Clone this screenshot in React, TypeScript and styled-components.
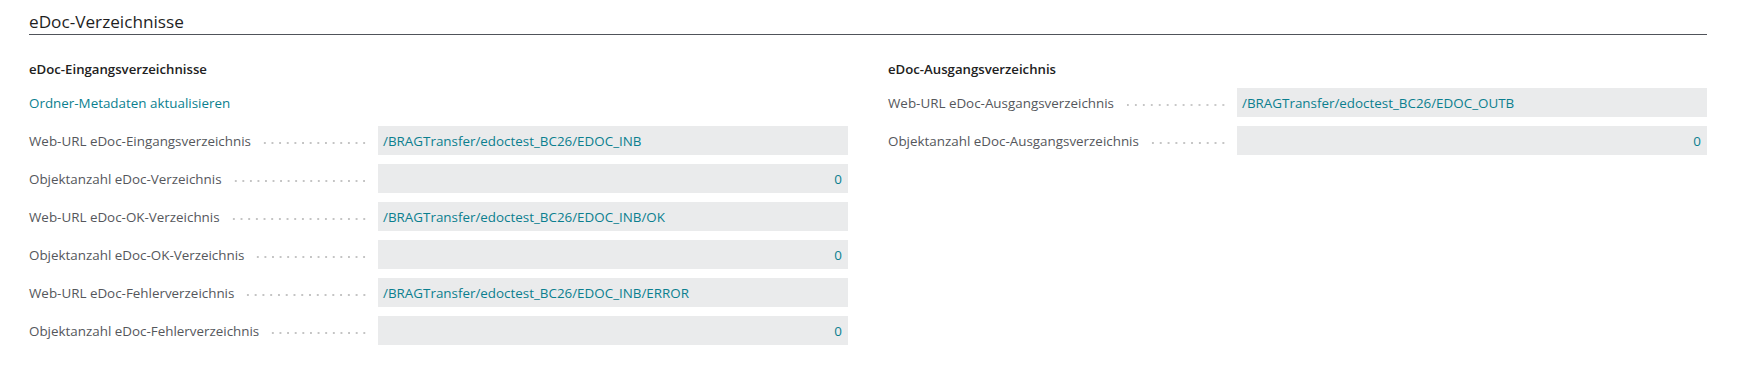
import React from 'react';
import styled, { createGlobalStyle } from 'styled-components';

const GlobalStyle = createGlobalStyle`
  html, body {
    margin: 0;
    padding: 0;
    background: #ffffff;
  }
  body {
    font-family: 'Open Sans', 'Noto Sans', 'Liberation Sans', sans-serif;
  }
`;

type Field = { caption: string; value: string; numeric?: boolean };
type Group = { title: string; action?: string; fields: Field[] };

const groups: Group[] = [
    {
        title: 'eDoc-Eingangsverzeichnisse',
        action: 'Ordner-Metadaten aktualisieren',
        fields: [
            { caption: 'Web-URL eDoc-Eingangsverzeichnis', value: '/BRAGTransfer/edoctest_BC26/EDOC_INB' },
            { caption: 'Objektanzahl eDoc-Verzeichnis', value: '0', numeric: true },
            { caption: 'Web-URL eDoc-OK-Verzeichnis', value: '/BRAGTransfer/edoctest_BC26/EDOC_INB/OK' },
            { caption: 'Objektanzahl eDoc-OK-Verzeichnis', value: '0', numeric: true },
            { caption: 'Web-URL eDoc-Fehlerverzeichnis', value: '/BRAGTransfer/edoctest_BC26/EDOC_INB/ERROR' },
            { caption: 'Objektanzahl eDoc-Fehlerverzeichnis', value: '0', numeric: true },
        ],
    },
    {
        title: 'eDoc-Ausgangsverzeichnis',
        fields: [
            { caption: 'Web-URL eDoc-Ausgangsverzeichnis', value: '/BRAGTransfer/edoctest_BC26/EDOC_OUTB' },
            { caption: 'Objektanzahl eDoc-Ausgangsverzeichnis', value: '0', numeric: true },
        ],
    },
];

export default function App() {
    return (
        <>
            <GlobalStyle />
            <Page>
                <SectionHeader>eDoc-Verzeichnisse</SectionHeader>
                <Columns>
                    {groups.map((group) => (
                        <Column key={group.title}>
                            <GroupTitle>{group.title}</GroupTitle>
                            {group.action && (
                                <Row>
                                    <ActionLink href="#">{group.action}</ActionLink>
                                </Row>
                            )}
                            {group.fields.map((field) => (
                                <Row key={field.caption}>
                                    <Caption>{field.caption}</Caption>
                                    <Leader />
                                    <FieldValue $numeric={field.numeric}>{field.value}</FieldValue>
                                </Row>
                            ))}
                        </Column>
                    ))}
                </Columns>
            </Page>
        </>
    );
}

const Page = styled.div`
    padding: 0 48px 0 29px;
`;

const SectionHeader = styled.h2`
    margin: 0;
    padding: 10px 0 0 0;
    height: 24px;
    line-height: 24px;
    font-size: 17.2px;
    font-weight: 400;
    color: #1f1f1f;
    border-bottom: 1px solid #50535a;
`;

const Columns = styled.div`
    display: grid;
    grid-template-columns: 1fr 1fr;
    column-gap: 40px;
    padding-top: 24px;
`;

const Column = styled.div`
    display: flex;
    flex-direction: column;
    gap: 9px;
`;

const GroupTitle = styled.div`
    height: 20px;
    line-height: 20px;
    font-size: 13.2px;
    font-weight: 600;
    color: #212121;
`;

const Row = styled.div`
    display: flex;
    align-items: center;
    height: 29px;
    font-size: 13.4px;
`;

const ActionLink = styled.a`
    color: #0b7f8f;
    text-decoration: none;
`;

const Caption = styled.span`
    color: #55575c;
    white-space: nowrap;
`;

const Leader = styled.span`
    flex: 1;
    height: 2px;
    margin: 5px 10px 0 10px;
    background-image: radial-gradient(circle, #c4c4c4 0.8px, transparent 1.2px);
    background-size: 7.5px 2px;
    background-repeat: space no-repeat;
`;

const FieldValue = styled.div<{ $numeric?: boolean }>`
    box-sizing: border-box;
    width: 470px;
    height: 29px;
    padding: 0 6px 0 5px;
    display: flex;
    align-items: center;
    justify-content: ${(p) => (p.$numeric ? 'flex-end' : 'flex-start')};
    background: #eaebec;
    color: #0b7f8f;
    white-space: nowrap;
`;
